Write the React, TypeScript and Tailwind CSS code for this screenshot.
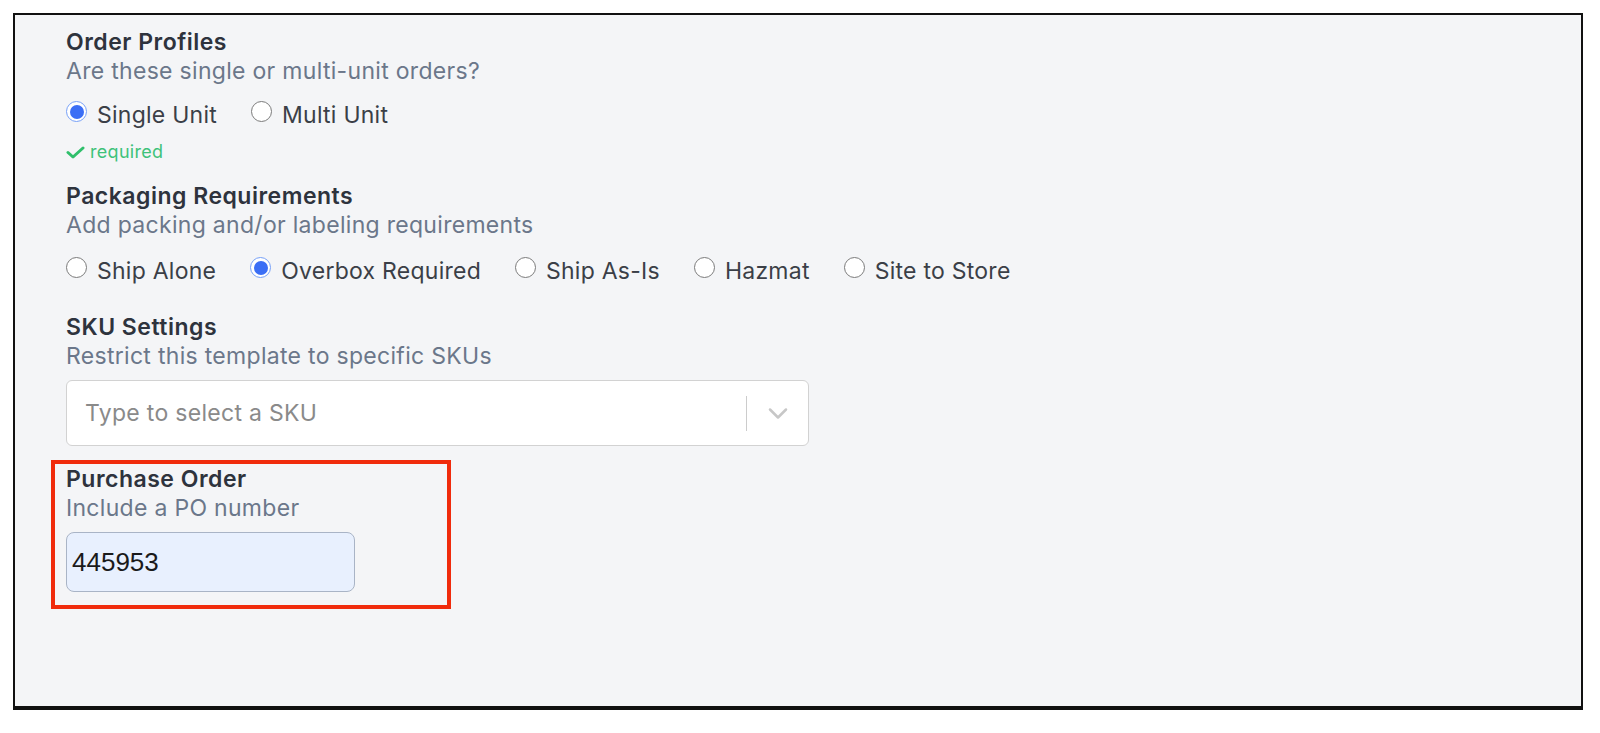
import { useState } from 'react';

const sans = { fontFamily: 'Inter, "Noto Sans", sans-serif' };

function Radio({ checked }: { checked: boolean }) {
  if (checked) {
    return (
      <span className="mt-[1px] flex h-[21px] w-[21px] shrink-0 items-center justify-center rounded-full border-[1.5px] border-[#76a0f7] bg-white">
        <span className="h-[14px] w-[14px] rounded-full bg-[#3b6ef5]" />
      </span>
    );
  }
  return <span className="mt-[1px] h-[21px] w-[21px] shrink-0 rounded-full border-[1.5px] border-[#7b7b7b] bg-white" />;
}

function RadioGroup({ options, value, onChange }: { options: string[]; value: string; onChange: (v: string) => void }) {
  return (
    <div className="flex h-[30px] items-start gap-[34px]">
      {options.map((opt) => (
        <label key={opt} className="flex cursor-pointer items-start gap-[10px]" onClick={() => onChange(opt)}>
          <Radio checked={opt === value} />
          <span className="text-[23px] leading-[30px] tracking-[0.25px] text-[#3b3f47]">{opt}</span>
        </label>
      ))}
    </div>
  );
}

function SectionHeader({ title, hint }: { title: string; hint: string }) {
  return (
    <div>
      <h2 className="text-[23px] font-semibold leading-[30px] tracking-[0.5px] text-[#2e333d]">{title}</h2>
      <p className="text-[23px] leading-[29px] tracking-[0.3px] text-[#6b778a]">{hint}</p>
    </div>
  );
}

export default function App() {
  const [profile, setProfile] = useState('Single Unit');
  const [packaging, setPackaging] = useState('Overbox Required');
  const [po, setPo] = useState('445953');

  return (
    <div className="min-h-screen bg-white pl-[13px] pt-[13px]" style={sans}>
      <div className="h-[697px] w-[1570px] border-2 border-b-4 border-[#111] bg-[#f4f5f7] pl-[51px] pt-[12px]">
        <SectionHeader title="Order Profiles" hint="Are these single or multi-unit orders?" />
        <div className="mt-[14px]">
          <RadioGroup options={['Single Unit', 'Multi Unit']} value={profile} onChange={setProfile} />
        </div>
        <div className="mt-[10px] flex h-[24px] items-center gap-[5px] text-[18px] leading-[24px] tracking-[0.3px] text-[#3ec27a]">
          <svg width="19" height="13" viewBox="0 0 19 13" fill="none">
            <polyline points="2,6.5 7,11 17,2" stroke="#2fbf6b" strokeWidth="3" strokeLinecap="round" strokeLinejoin="round" />
          </svg>
          <span>required</span>
        </div>

        <div className="mt-[17px]">
          <SectionHeader title="Packaging Requirements" hint="Add packing and/or labeling requirements" />
        </div>
        <div className="mt-[16px]">
          <RadioGroup
            options={['Ship Alone', 'Overbox Required', 'Ship As-Is', 'Hazmat', 'Site to Store']}
            value={packaging}
            onChange={setPackaging}
          />
        </div>

        <div className="mt-[26px]">
          <SectionHeader title="SKU Settings" hint="Restrict this template to specific SKUs" />
        </div>
        <div className="mt-[9px] flex h-[66px] w-[743px] items-center rounded-[6px] border-[1.5px] border-[#d2d2d2] bg-white">
          <input
            className="h-full min-w-0 flex-1 bg-transparent pl-[18px] text-[23px] tracking-[0.3px] text-[#333] outline-none placeholder:text-[#8a8a8a]"
            placeholder="Type to select a SKU"
            style={sans}
          />
          <span className="h-[35px] w-[1.5px] bg-[#cccccc]" />
          <div className="flex w-[61px] items-center justify-center">
            <svg width="20" height="13" viewBox="0 0 20 13" fill="none">
              <polyline points="2,2.5 10,10.5 18,2.5" stroke="#c7c7c7" strokeWidth="2.5" strokeLinecap="round" strokeLinejoin="round" />
            </svg>
          </div>
        </div>

        <div className="-ml-[15px] mt-[14px] w-[400px] border-4 border-[#f02b0c] pb-[13px] pl-[11px]">
          <SectionHeader title="Purchase Order" hint="Include a PO number" />
          <input
            value={po}
            onChange={(e) => setPo(e.target.value)}
            className="mt-[9px] block h-[60px] w-[289px] rounded-[8px] border-[1.5px] border-[#a9b4c6] bg-[#e8f0fe] pl-[5px] text-[26px] text-[#1a1a1a] outline-none"
            style={{ fontFamily: '"Liberation Sans", Arial, sans-serif' }}
          />
        </div>
      </div>
    </div>
  );
}
